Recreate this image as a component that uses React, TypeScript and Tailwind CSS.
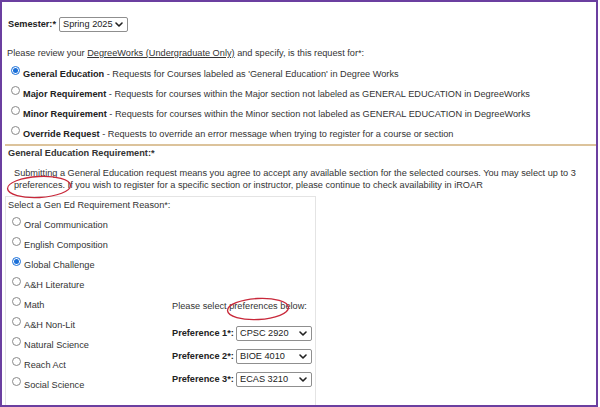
import React from "react";

const Radio = ({ checked = false }: { checked?: boolean }) =>
  checked ? (
    <span className="w-[9px] h-[9px] rounded-full border border-[#1a6fd8] bg-white flex items-center justify-center shrink-0">
      <span className="w-[5px] h-[5px] rounded-full bg-[#1a6fd8]" />
    </span>
  ) : (
    <span className="block w-[9px] h-[9px] rounded-full border border-[#8a8a8a] bg-white shrink-0" />
  );

const Chevron = () => (
  <svg width="8" height="5" viewBox="0 0 8 5" className="shrink-0">
    <path d="M1 1 L4 4 L7 1" fill="none" stroke="#222" strokeWidth="1.6" strokeLinecap="round" strokeLinejoin="round" />
  </svg>
);

const Select = ({ value, w }: { value: string; w: string }) => (
  <div className={`${w} h-[15px] border border-[#8f8f8f] rounded-[2px] bg-white flex items-center justify-between pl-[3px] pr-[4px] text-[#222]`}>
    <span>{value}</span>
    <Chevron />
  </div>
);

const TopOption = ({ checked, title, desc }: { checked?: boolean; title: string; desc: string }) => (
  <div className="flex h-[20px] items-start">
    <span className="mt-[1.5px] ml-[9px]">
      <Radio checked={checked} />
    </span>
    <span className="ml-[3px] mt-[4.5px] whitespace-nowrap">
      <b className="text-[#222]">{title}</b> - {desc}
    </span>
  </div>
);

const ListOption = ({ checked, label }: { checked?: boolean; label: string }) => (
  <div className="flex h-[20px] items-start">
    <span className="mt-[1.5px] ml-[6px]">
      <Radio checked={checked} />
    </span>
    <span className="ml-[3px] mt-[4.5px] whitespace-nowrap">{label}</span>
  </div>
);

const PrefRow = ({ n, value }: { n: number; value: string }) => (
  <div className="flex items-center h-[15px]">
    <b className="w-[64px] whitespace-nowrap text-[#222]">Preference {n}*:</b>
    <Select value={value} w="w-[76px]" />
  </div>
);

export default function App() {
  return (
    <div className="w-[600px] h-[407px] bg-white overflow-hidden">
      <div className="relative w-[598px] h-[407px] border-2 border-[#6b3fa0] bg-white overflow-hidden font-['Liberation_Sans',Arial,sans-serif] text-[9.2px] leading-[11px] text-[#333]">
        {/* Semester */}
        <div className="flex items-center pt-[15px] pl-[6px] gap-[3px]">
          <b className="text-[#222]">Semester:*</b>
          <Select value="Spring 2025" w="w-[69px]" />
        </div>

        <div className="mt-[16px] pl-[5px] whitespace-nowrap">
          Please review your <span className="underline">DegreeWorks (Undergraduate Only)</span> and specify, is this request for*:
        </div>

        <div className="mt-[5px]">
          <TopOption checked title="General Education" desc="Requests for Courses labeled as 'General Education' in Degree Works" />
          <TopOption title="Major Requirement" desc="Requests for courses within the Major section not labeled as GENERAL EDUCATION in DegreeWorks" />
          <TopOption title="Minor Requirement" desc="Requests for courses within the Minor section not labeled as GENERAL EDUCATION in DegreeWorks" />
          <TopOption title="Override Request" desc="Requests to override an error message when trying to register for a course or section" />
        </div>

        <div className="mt-[0px] ml-[3px] h-[2px] bg-[#dcc39b]" />

        <div className="mt-[2px] pl-[6px] font-bold text-[#333]">General Education Requirement:*</div>

        <div className="mt-[7.5px] pl-[12px] leading-[12px] whitespace-nowrap">
          Submitting a General Education request means you agree to accept any available section for the selected courses. You may select up to 3
          <br />
          preferences. If you wish to register for a specific section or instructor, please continue to check availability in iROAR
        </div>

        <div className="mt-[5px] ml-[3px] w-[311px] h-[220px] border-t border-l border-r border-[#e4e4e4]">
          <div className="pt-[3px] pl-[2px]">Select a Gen Ed Requirement Reason*:</div>
          <div className="flex mt-[4.5px]">
            <div className="w-[166px]">
              <ListOption label="Oral Communication" />
              <ListOption label="English Composition" />
              <ListOption checked label="Global Challenge" />
              <ListOption label="A&H Literature" />
              <ListOption label="Math" />
              <ListOption label="A&H Non-Lit" />
              <ListOption label="Natural Science" />
              <ListOption label="Reach Act" />
              <ListOption label="Social Science" />
            </div>
            <div className="mt-[85.5px] flex flex-col">
              <div className="whitespace-nowrap">Please select preferences below:</div>
              <div className="mt-[14px] flex flex-col gap-[8.3px]">
                <PrefRow n={1} value="CPSC 2920" />
                <PrefRow n={2} value="BIOE 4010" />
                <PrefRow n={3} value="ECAS 3210" />
              </div>
            </div>
          </div>
        </div>

        {/* annotation ellipses */}
        <svg className="absolute left-[4px] top-[173px]" width="66" height="24" viewBox="0 0 66 24">
          <ellipse cx="33" cy="12" rx="31.5" ry="10.5" fill="none" stroke="#c8283a" strokeWidth="1.3" transform="rotate(-3 33 12)" />
        </svg>
        <svg className="absolute left-[224px] top-[295px]" width="64" height="24" viewBox="0 0 64 24">
          <ellipse cx="32" cy="12" rx="30.5" ry="10.5" fill="none" stroke="#c8283a" strokeWidth="1.3" transform="rotate(-3 32 12)" />
        </svg>
      </div>
    </div>
  );
}
